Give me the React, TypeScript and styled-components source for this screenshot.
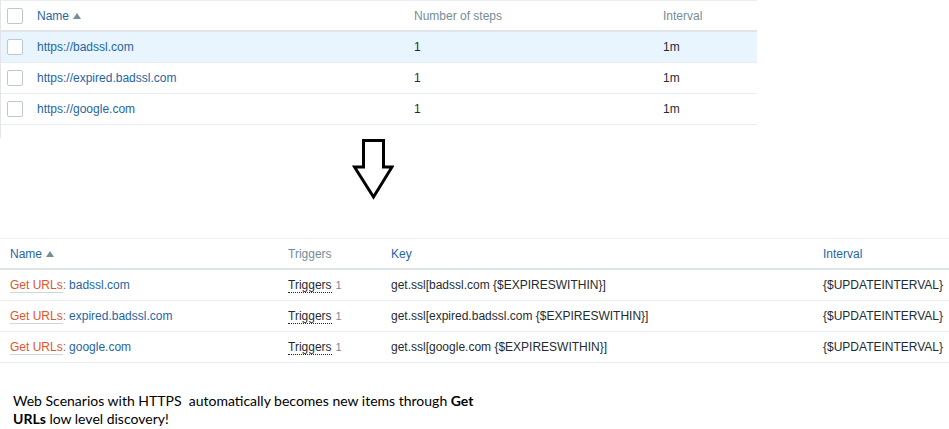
import React from 'react';
import styled, { createGlobalStyle } from 'styled-components';

const GlobalStyle = createGlobalStyle`
  html, body {
    margin: 0;
    padding: 0;
    background: #ffffff;
  }
  body {
    font-family: "Liberation Sans", Arial, sans-serif;
    font-size: 12px;
    color: #1f2c33;
  }
`;

const Page = styled.div`
  display: flex;
  flex-direction: column;
  width: 949px;
  height: 429px;
  overflow: hidden;
`;

const TopSection = styled.div`
  width: 756px;
  border-left: 1px solid #e3e6e8;
  padding-bottom: 13px;
`;

const Table = styled.table`
  width: 100%;
  border-collapse: collapse;
  table-layout: fixed;
  border-top: 1px solid #ebeef0;
`;

const HeadCell = styled.th<{ $w?: number; $first?: boolean }>`
  width: ${(p) => (p.$w ? `${p.$w}px` : 'auto')};
  height: 29px;
  padding: 0 0 0 ${(p) => (p.$first ? 10 : 7)}px;
  text-align: left;
  font-weight: normal;
  color: #768d99;
  border-bottom: 2px solid #dfe4e7;
  white-space: nowrap;
  vertical-align: middle;
`;

const Cell = styled.td<{ $first?: boolean }>`
  height: 30px;
  padding: 0 0 0 ${(p) => (p.$first ? 10 : 7)}px;
  border-bottom: 1px solid #ebeef0;
  white-space: nowrap;
  vertical-align: middle;
`;

const Row = styled.tr<{ $active?: boolean }>`
  background: ${(p) => (p.$active ? '#e8f5ff' : 'transparent')};
`;

const CheckCell = styled.td`
  padding: 0 0 0 6px;
  border-bottom: 1px solid #ebeef0;
  height: 30px;
  vertical-align: middle;
`;

const CheckHead = styled.th`
  width: 23px;
  padding: 0 0 0 6px;
  height: 29px;
  border-bottom: 2px solid #dfe4e7;
  vertical-align: middle;
`;

const Checkbox = styled.span`
  display: block;
  width: 14px;
  height: 14px;
  border: 1px solid #bfc8cc;
  border-radius: 2px;
  background: #ffffff;
`;

const SortLink = styled.span<{ $active?: boolean }>`
  color: ${(p) => (p.$active ? '#1f65a6' : '#768d99')};
`;

const SortArrow = styled.span`
  display: inline-block;
  margin-left: 4px;
  width: 0;
  height: 0;
  border-left: 4px solid transparent;
  border-right: 4px solid transparent;
  border-bottom: 6px solid #768d99;
  vertical-align: 1px;
`;

const Link = styled.span`
  color: #1f65a6;
`;

const OrangeLink = styled.span`
  color: #e0552b;
  border-bottom: 1px solid #cfd5d8;
`;

const Sep = styled.span`
  color: #5b7a94;
  margin-right: 3px;
`;

const DottedLink = styled.span`
  color: #1f2c33;
  border-bottom: 1px dotted #1f2c33;
`;

const Count = styled.span`
  color: #768d99;
  font-size: 11px;
  margin-left: 4px;
`;

const ArrowRow = styled.div`
  display: flex;
  padding-left: 352px;
  height: 62px;
`;

const BottomSection = styled.div`
  margin-top: 38px;
  width: 949px;
`;

const Note = styled.p`
  margin: 29px 0 0 13px;
  font-family: Lato, "Open Sans", sans-serif;
  font-size: 14px;
  line-height: 18px;
  color: #000000;
`;

const scenarios = [
  { name: 'https://badssl.com', host: 'badssl.com' },
  { name: 'https://expired.badssl.com', host: 'expired.badssl.com' },
  { name: 'https://google.com', host: 'google.com' },
];

const DownArrow = () => (
  <svg width="42" height="62" viewBox="0 0 42 62">
    <path
      d="M11.5 2.5 H31.5 V29 H40 L21.5 59 L2.5 29 H11.5 Z"
      fill="none"
      stroke="#000"
      strokeWidth="3"
      strokeLinejoin="miter"
    />
  </svg>
);

const App = () => (
  <Page>
    <GlobalStyle />
    <TopSection>
      <Table>
        <thead>
          <tr>
            <CheckHead>
              <Checkbox />
            </CheckHead>
            <HeadCell $w={370}>
              <SortLink $active>Name</SortLink>
              <SortArrow />
            </HeadCell>
            <HeadCell $w={242}>Number of steps</HeadCell>
            <HeadCell>Interval</HeadCell>
          </tr>
        </thead>
        <tbody>
          {scenarios.map((s, i) => (
            <Row key={s.name} $active={i === 0}>
              <CheckCell>
                <Checkbox />
              </CheckCell>
              <Cell>
                <Link>{s.name}</Link>
              </Cell>
              <Cell>1</Cell>
              <Cell>1m</Cell>
            </Row>
          ))}
        </tbody>
      </Table>
    </TopSection>

    <ArrowRow>
      <DownArrow />
    </ArrowRow>

    <BottomSection>
      <Table>
        <thead>
          <tr>
            <HeadCell $w={271} $first>
              <SortLink $active>Name</SortLink>
              <SortArrow />
            </HeadCell>
            <HeadCell $w={96}>Triggers</HeadCell>
            <HeadCell $w={425}>
              <SortLink $active>Key</SortLink>
            </HeadCell>
            <HeadCell>
              <SortLink $active>Interval</SortLink>
            </HeadCell>
          </tr>
        </thead>
        <tbody>
          {scenarios.map((s) => (
            <Row key={s.host}>
              <Cell $first>
                <OrangeLink>Get URLs</OrangeLink>
                <Sep>:</Sep>
                <Link>{s.host}</Link>
              </Cell>
              <Cell>
                <DottedLink>Triggers</DottedLink>
                <Count>1</Count>
              </Cell>
              <Cell>{`get.ssl[${s.host} {$EXPIRESWITHIN}]`}</Cell>
              <Cell>{'{$UPDATEINTERVAL}'}</Cell>
            </Row>
          ))}
        </tbody>
      </Table>
    </BottomSection>

    <Note>
      Web Scenarios with HTTPS&nbsp; automatically becomes new items through <b>Get</b>
      <br />
      <b>URLs</b> low level discovery!
    </Note>
  </Page>
);

export default App;
